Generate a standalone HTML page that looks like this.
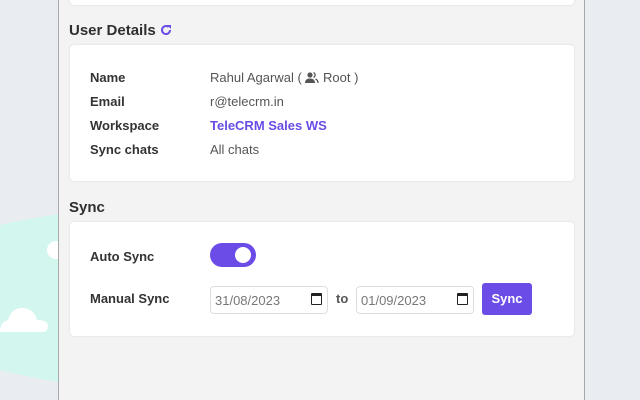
<!DOCTYPE html>
<html><head><style>
*{box-sizing:border-box;margin:0;padding:0}
body{width:640px;height:400px;overflow:hidden;background:#e9edf1;font-family:"Liberation Sans",sans-serif;position:relative;color:#333}
.panel{position:absolute;left:58px;top:0;width:527px;height:400px;background:#f3f3f3;border-left:1px solid #a9a9a9;border-right:1px solid #a9a9a9}
.card{position:absolute;left:11px;width:504px;background:#fff;border-radius:4px;box-shadow:0 0 2px rgba(0,0,0,.12)}
h2{position:absolute;left:10px;font-size:15px;font-weight:bold;color:#2f2f2f}
.row{position:absolute;left:20px;font-size:13px;height:16px;line-height:16px}
.l{position:absolute;left:0;font-weight:bold;color:#333;white-space:nowrap}
.v{position:absolute;left:120px;color:#555;white-space:nowrap}
.date{position:absolute;top:64px;width:118px;height:28px;border:1px solid #ddd;border-radius:4px;font-size:13px;color:#777;padding:6px 0 0 4px}
.cal{position:absolute;right:5px;top:6px;width:11px;height:12px;border:1.5px solid #222;border-top-width:3px;border-radius:1px}
</style></head><body>
<svg style="position:absolute;left:0;top:210px" width="60" height="180"><path d="M0 15 Q30 8 60 4 L60 172 Q30 168 0 160 Z" fill="#d3f6ef"/><circle cx="56" cy="40" r="9" fill="#fff"/><path d="M0 122 Q0 112 8 110 Q12 97 24 98 Q35 100 37 110 Q48 110 48 116 Q48 122 42 122 Z" fill="#fff"/></svg>
<div class="panel">
  <div class="card" style="top:-10px;height:15px"></div>
  <h2 style="top:22px">User Details <svg width="12" height="12" viewBox="0 0 12 12" style="vertical-align:-1px"><path d="M10 6 A4 4 0 1 1 8.6 3" fill="none" stroke="#6b4ce6" stroke-width="2"/><path d="M7 1 L11 1 L11 5 Z" fill="#6b4ce6"/></svg></h2>
  <div class="card" style="top:45px;height:136px">
    <div class="row" style="top:25px"><span class="l">Name</span><span class="v">Rahul Agarwal ( <svg width="14" height="11" viewBox="0 0 14 11" style="vertical-align:-1px"><circle cx="5" cy="3" r="2.6" fill="#555"/><path d="M0 11 Q0 6.5 5 6.5 Q10 6.5 10 11 Z" fill="#555"/><path d="M8.5 0.6 A2.6 2.6 0 0 1 8.5 5.4" fill="none" stroke="#555" stroke-width="1.2"/><path d="M10.5 7 Q13 8 13 11" fill="none" stroke="#555" stroke-width="1.3"/></svg> Root )</span></div>
    <div class="row" style="top:49px"><span class="l">Email</span><span class="v">r@telecrm.in</span></div>
    <div class="row" style="top:73px"><span class="l">Workspace</span><span class="v" style="color:#6b4ce6;font-weight:bold">TeleCRM Sales WS</span></div>
    <div class="row" style="top:97px"><span class="l">Sync chats</span><span class="v">All chats</span></div>
  </div>
  <h2 style="top:199px">Sync</h2>
  <div class="card" style="top:222px;height:114px">
    <div class="row" style="top:27px"><span class="l">Auto Sync</span></div>
    <div style="position:absolute;left:140px;top:21px;width:46px;height:24px;background:#6b4ce6;border-radius:12px"><div style="position:absolute;right:5px;top:4px;width:16px;height:16px;background:#fff;border-radius:50%"></div></div>
    <div class="row" style="top:69px"><span class="l">Manual Sync</span></div>
    <div class="date" style="left:140px">31/08/2023<div class="cal"></div></div>
    <div style="position:absolute;left:266px;top:69px;font-size:13px;font-weight:bold;color:#555">to</div>
    <div class="date" style="left:286px">01/09/2023<div class="cal"></div></div>
    <div style="position:absolute;left:412px;top:61px;width:50px;height:32px;background:#6b4ce6;border-radius:3px;color:#fff;font-size:13px;font-weight:bold;text-align:center;line-height:32px">Sync</div>
  </div>
</div>
</body></html>
